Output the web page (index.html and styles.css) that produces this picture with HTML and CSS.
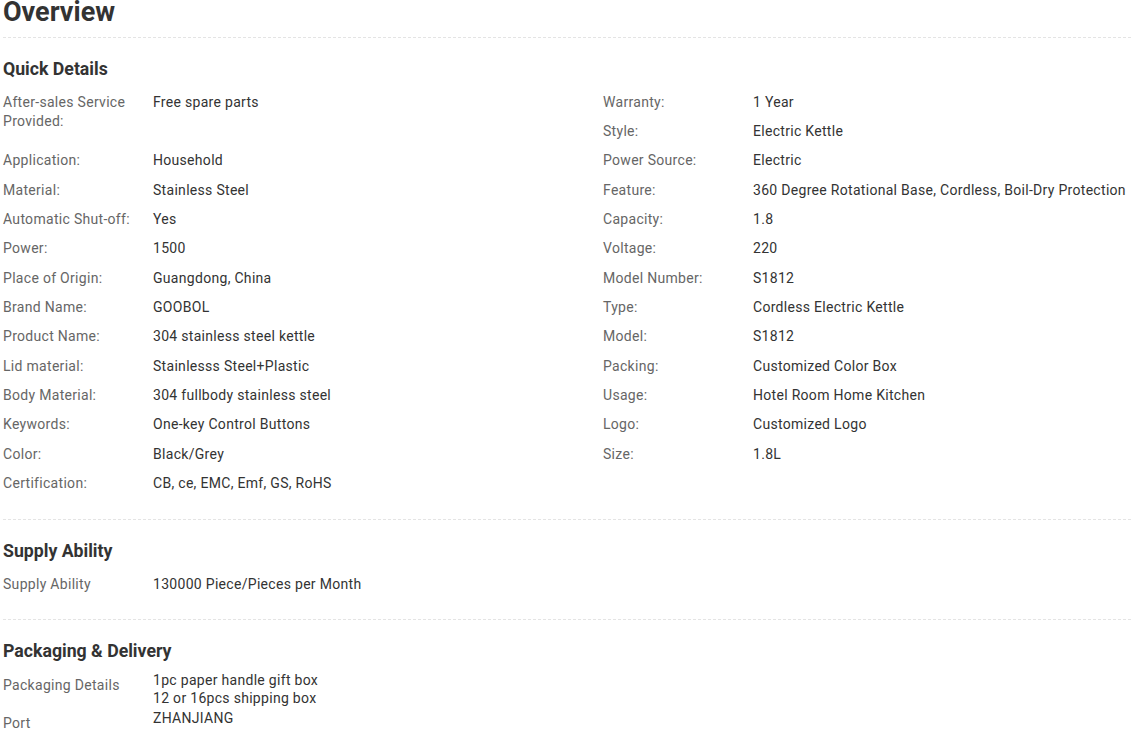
FILE: index.html
```html
<!DOCTYPE html>
<html lang="en">
<head>
<meta charset="utf-8">
<title>Overview</title>
<link rel="stylesheet" href="styles.css">
</head>
<body>
<div class="page">
  <h1 class="title">Overview</h1>

  <section class="section">
    <h2 class="section-title">Quick Details</h2>
    <div class="details">
      <div class="col">
        <div class="item span2"><div class="label">After-sales Service Provided:</div><div class="value">Free spare parts</div></div>
        <div class="item"><div class="label">Application:</div><div class="value">Household</div></div>
        <div class="item"><div class="label">Material:</div><div class="value">Stainless Steel</div></div>
        <div class="item"><div class="label">Automatic Shut-off:</div><div class="value">Yes</div></div>
        <div class="item"><div class="label">Power:</div><div class="value">1500</div></div>
        <div class="item"><div class="label">Place of Origin:</div><div class="value">Guangdong, China</div></div>
        <div class="item"><div class="label">Brand Name:</div><div class="value">GOOBOL</div></div>
        <div class="item"><div class="label">Product Name:</div><div class="value">304 stainless steel kettle</div></div>
        <div class="item"><div class="label">Lid material:</div><div class="value">Stainlesss Steel+Plastic</div></div>
        <div class="item"><div class="label">Body Material:</div><div class="value">304 fullbody stainless steel</div></div>
        <div class="item"><div class="label">Keywords:</div><div class="value">One-key Control Buttons</div></div>
        <div class="item"><div class="label">Color:</div><div class="value">Black/Grey</div></div>
        <div class="item"><div class="label">Certification:</div><div class="value">CB, ce, EMC, Emf, GS, RoHS</div></div>
      </div>
      <div class="col">
        <div class="item"><div class="label">Warranty:</div><div class="value">1 Year</div></div>
        <div class="item"><div class="label">Style:</div><div class="value">Electric Kettle</div></div>
        <div class="item"><div class="label">Power Source:</div><div class="value">Electric</div></div>
        <div class="item"><div class="label">Feature:</div><div class="value">360 Degree Rotational Base, Cordless, Boil-Dry Protection</div></div>
        <div class="item"><div class="label">Capacity:</div><div class="value">1.8</div></div>
        <div class="item"><div class="label">Voltage:</div><div class="value">220</div></div>
        <div class="item"><div class="label">Model Number:</div><div class="value">S1812</div></div>
        <div class="item"><div class="label">Type:</div><div class="value">Cordless Electric Kettle</div></div>
        <div class="item"><div class="label">Model:</div><div class="value">S1812</div></div>
        <div class="item"><div class="label">Packing:</div><div class="value">Customized Color Box</div></div>
        <div class="item"><div class="label">Usage:</div><div class="value">Hotel Room Home Kitchen</div></div>
        <div class="item"><div class="label">Logo:</div><div class="value">Customized Logo</div></div>
        <div class="item"><div class="label">Size:</div><div class="value">1.8L</div></div>
      </div>
    </div>
  </section>

  <section class="section">
    <h2 class="section-title">Supply Ability</h2>
    <div class="col">
      <div class="item"><div class="label">Supply Ability</div><div class="value">130000 Piece/Pieces per Month</div></div>
    </div>
  </section>

  <section class="section last">
    <h2 class="section-title">Packaging &amp; Delivery</h2>
    <div class="pack">
      <div class="pack-row"><div class="label">Packaging Details</div><div class="value">1pc paper handle gift box<br>12 or 16pcs shipping box</div></div>
      <div class="pack-row"><div class="label">Port</div><div class="value">ZHANJIANG</div></div>
    </div>
  </section>
</div>
</body>
</html>
```

FILE: styles.css
```css
html, body {
  margin: 0;
  padding: 0;
  background: #ffffff;
}
html {
  overflow: hidden;
}
body {
  font-family: Roboto, "Liberation Sans", Arial, sans-serif;
  font-size: 14px;
  color: #333333;
}
.page {
  padding-left: 3px;
}
.title {
  margin: 0;
  font-size: 27px;
  line-height: 24px;
  font-weight: 700;
  color: #333333;
  padding-bottom: 13px;
}
.section {
  border-top: 1px dashed #e4e4e4;
  padding-top: 19px;
  padding-bottom: 20.5px;
}
.section.last {
  padding-bottom: 0;
}
.section-title {
  margin: 0 0 6.5px 0;
  font-size: 17.7px;
  line-height: 24px;
  font-weight: 700;
  color: #333333;
}
.details {
  display: grid;
  grid-template-columns: 600px 1fr;
}
.col {
  display: grid;
  grid-auto-rows: 29.36px;
}
.item {
  display: flex;
  padding-top: 5px;
  line-height: 19px;
  box-sizing: border-box;
}
.item.span2 {
  grid-row: span 2;
}
.label {
  width: 140px;
  padding-right: 10px;
  flex: none;
  color: #666666;
  letter-spacing: 0.3px;
}
.value {
  color: #333333;
  white-space: nowrap;
  letter-spacing: 0.3px;
}
.pack-row {
  display: flex;
}
.pack-row .label {
  padding-top: 6px;
  line-height: 19px;
}
.pack-row .value {
  padding-top: 1px;
  line-height: 18.4px;
}
```
